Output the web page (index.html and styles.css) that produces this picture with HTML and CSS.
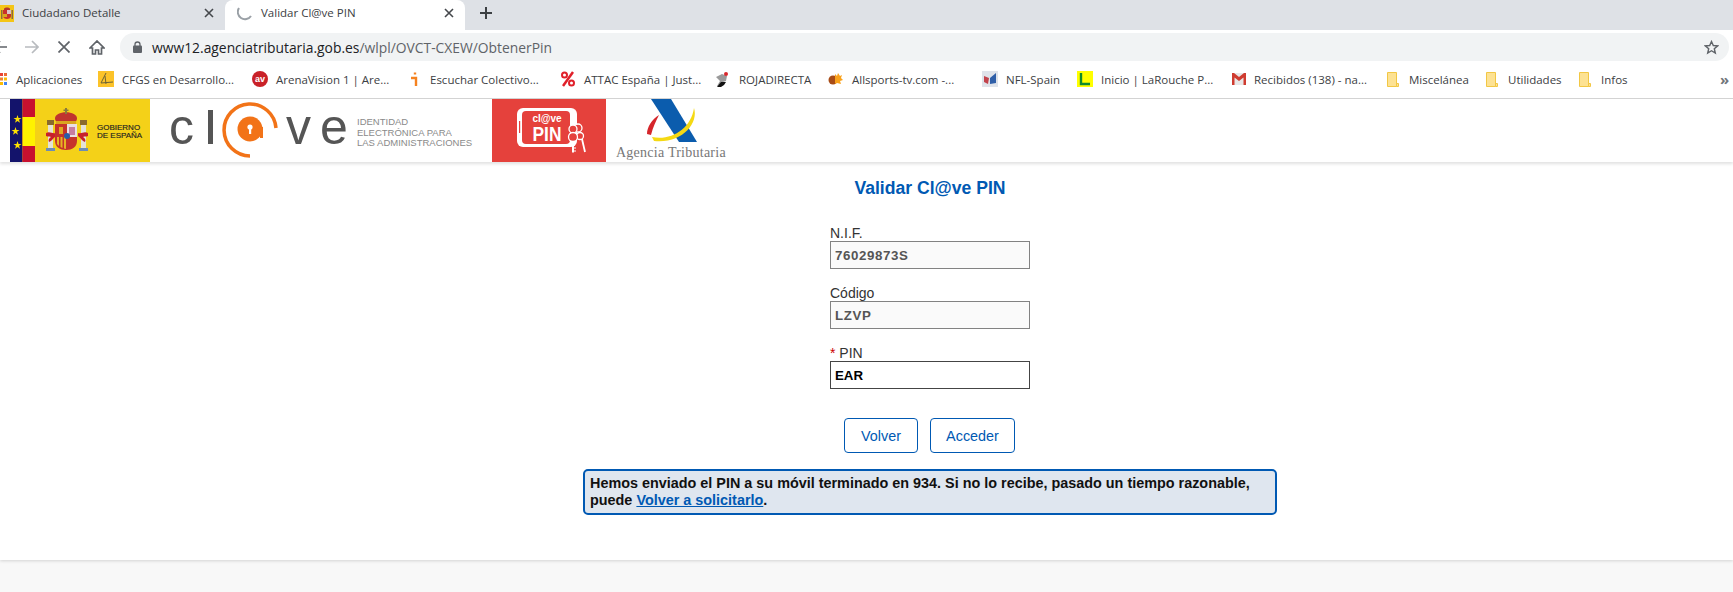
FILE: index.html
```html
<!DOCTYPE html>
<html lang="es">
<head>
    <meta charset="UTF-8">
    <meta name="viewport" content="width=device-width, initial-scale=1.0">
    <title>Validar Cl@ve PIN</title>
    <link rel="stylesheet" href="styles.css">
</head>
<body>

    <!-- Browser chrome -->
    <div class="tab-strip">
        <div class="tab">
            <svg class="tab-favicon" width="14" height="17" viewBox="0 0 14 17">
                <rect width="14" height="17" fill="#f4c516"/>
                <path d="M4 4c0-2 6-2 6 0v1H4z" fill="#b5372c"/>
                <path d="M3 5h8v6c0 2-2 3-4 3s-4-1-4-3z" fill="#c9302c"/>
                <rect x="7" y="5" width="4" height="4" fill="#d9c2c8"/>
                <rect x="3" y="9" width="4" height="3" fill="#d9a520"/>
                <rect x="1" y="5" width="1.500" height="9" fill="#8c6b3c"/>
                <rect x="11.500" y="5" width="1.500" height="9" fill="#8c6b3c"/>
            </svg>
            <span class="tab-title">Ciudadano Detalle</span>
            <svg class="tab-close" width="10" height="10" viewBox="0 0 10 10"><path d="M1 1l8 8M9 1l-8 8"/></svg>
        </div>
        <div class="tab tab-active">
            <svg class="tab-spinner" width="16" height="16" viewBox="0 0 16 16"><path d="M2 3a7 7 0 0 0 12 8"/></svg>
            <span class="tab-title">Validar Cl@ve PIN</span>
            <svg class="tab-close" width="10" height="10" viewBox="0 0 10 10"><path d="M1 1l8 8M9 1l-8 8"/></svg>
        </div>
        <svg class="new-tab" width="12" height="12" viewBox="0 0 12 12"><path d="M6 0v12M0 6h12"/></svg>
    </div>

    <div class="toolbar">
        <svg class="nav-icon back" width="14" height="14" viewBox="0 0 14 14"><path d="M14 7H1M7 1L1 7l6 6"/></svg>
        <svg class="nav-icon forward" width="14" height="14" viewBox="0 0 14 14"><path d="M0 7h13M7 1l6 6-6 6"/></svg>
        <svg class="nav-icon stop" width="12" height="12" viewBox="0 0 12 12"><path d="M.5.5l11 11M11.500.5l-11 11"/></svg>
        <svg class="nav-icon home" width="16" height="15" viewBox="0 0 16 15"><path d="M1 8l7-7 7 7h-2.500v6h-3v-4h-3v4h-3V8z"/></svg>
        <div class="omnibox">
            <svg class="lock" width="9" height="12" viewBox="0 0 9 12"><path d="M2 5V3.500a2.500 2.500 0 0 1 5 0V5" fill="none" stroke="#5f6368" stroke-width="1.300"/><rect y="4.500" width="9" height="7.500" rx="1" fill="#5f6368"/></svg>
            <span class="url">www12.agenciatributaria.gob.es<span class="url-path">/wlpl/OVCT-CXEW/ObtenerPin</span></span>
            <svg class="star" width="15" height="15" viewBox="0 0 15 15"><path d="M7.500 1.500l1.800 4 4.300.4-3.300 2.800 1 4.300-3.800-2.300-3.800 2.300 1-4.300L1.400 5.900l4.300-.4z"/></svg>
        </div>
    </div>

    <div class="bookmarks">
        <div class="bookmark apps">
            <svg width="7" height="12" viewBox="0 0 7 12">
                <rect y="0" width="3" height="3" fill="#ea4335"/><rect x="4" y="0" width="3" height="3" fill="#ea6a35"/>
                <rect y="4.500" width="3" height="3" fill="#ea8335"/><rect x="4" y="4.500" width="3" height="3" fill="#fbbc05"/>
                <rect y="9" width="3" height="3" fill="#fbbc05"/><rect x="4" y="9" width="3" height="3" fill="#4285f4"/>
            </svg>
            <span>Aplicaciones</span>
        </div>
        <div class="bookmark">
            <svg width="16" height="16" viewBox="0 0 16 16"><rect width="16" height="16" fill="#fcc329"/><path d="M8 2L3 12l12-1M7 5l1 8" fill="none" stroke="#6b6236" stroke-width="1"/></svg>
            <span>CFGS en Desarrollo...</span>
        </div>
        <div class="bookmark">
            <svg width="16" height="16" viewBox="0 0 16 16"><circle cx="8" cy="8" r="8" fill="#c92128"/><text x="8" y="11" class="fav-av">av</text></svg>
            <span>ArenaVision 1 | Are...</span>
        </div>
        <div class="bookmark bookmark-narrow">
            <svg width="14" height="16" viewBox="0 0 14 16"><path d="M3 7h5v8M7 1.500v2" fill="none" stroke="#f58220" stroke-width="2.400"/></svg>
            <span>Escuchar Colectivo...</span>
        </div>
        <div class="bookmark">
            <svg width="16" height="16" viewBox="0 0 16 16"><path d="M13 1L3 15" stroke="#e0202a" stroke-width="2.500"/><circle cx="4.500" cy="4" r="2.500" fill="none" stroke="#e0202a" stroke-width="2"/><circle cx="11.500" cy="12" r="2.500" fill="none" stroke="#e0202a" stroke-width="2"/></svg>
            <span>ATTAC España | Just...</span>
        </div>
        <div class="bookmark">
            <svg width="16" height="16" viewBox="0 0 16 16"><path d="M1 6l6-3 5 2-1 5-3 1-2 4H2l3-5z" fill="#9a9a9a"/><path d="M2 16l4-5h5l-2 3-3 2z" fill="#111"/><circle cx="11" cy="3" r="2" fill="#d8272d"/></svg>
            <span>ROJADIRECTA</span>
        </div>
        <div class="bookmark">
            <svg width="16" height="16" viewBox="0 0 16 16"><circle cx="5" cy="9" r="4.500" fill="#a84c17"/><path d="M7 3l2 2 1-3 2 3 2-1-1 3 2 2-3 1 1 3-4-1-2 1z" fill="#f9a11b"/></svg>
            <span>Allsports-tv.com -...</span>
        </div>
        <div class="bookmark">
            <svg width="16" height="16" viewBox="0 0 16 16"><rect width="16" height="16" fill="#dfe3ea"/><path d="M2 5l5 2-1 6-4-2z" fill="#c2434c"/><path d="M8 7l6-5v10l-6 1z" fill="#2f5fa8"/></svg>
            <span>NFL-Spain</span>
        </div>
        <div class="bookmark">
            <svg width="16" height="16" viewBox="0 0 16 16"><rect width="16" height="16" fill="#ffff00"/><path d="M4 2v11h9" fill="none" stroke="#0f8a2c" stroke-width="2.400"/></svg>
            <span>Inicio | LaRouche P...</span>
        </div>
        <div class="bookmark">
            <svg width="14" height="12" viewBox="0 0 14 12"><rect width="14" height="12" fill="#e8e8e8"/><path d="M0 0h2l5 4 5-4h2v12h-2.500V4.500L7 8 2.500 4.500V12H0z" fill="#cf3c30"/></svg>
            <span>Recibidos (138) - na...</span>
        </div>
        <div class="bookmark bookmark-folder">
            <svg class="folder" width="12" height="15" viewBox="0 0 12 15"><path d="M.5.500h9v14h-9z"/><path d="M9.500 11.500h2v3h-2z"/></svg>
            <span>Miscelánea</span>
        </div>
        <div class="bookmark bookmark-folder">
            <svg class="folder" width="12" height="15" viewBox="0 0 12 15"><path d="M.5.500h9v14h-9z"/><path d="M9.500 11.500h2v3h-2z"/></svg>
            <span>Utilidades</span>
        </div>
        <div class="bookmark bookmark-folder">
            <svg class="folder" width="12" height="15" viewBox="0 0 12 15"><path d="M.5.500h9v14h-9z"/><path d="M9.500 11.500h2v3h-2z"/></svg>
            <span>Infos</span>
        </div>
        <div class="bookmark more">»</div>
    </div>

    <!-- Page header logos -->
    <header class="logos">
        <svg class="logo logo-gob" width="140" height="63" viewBox="0 0 140 63">
            <rect width="140" height="63" fill="#f4d118"/>
            <rect width="12.500" height="63" fill="#13136b"/>
            <rect x="12.500" width="12.500" height="63" fill="#c8102e"/>
            <rect x="12.500" y="18" width="12.500" height="29" fill="#fff200"/>
            <g fill="#ffe100">
                <path d="M7.500 16l1 3h3l-2.500 1.800 1 3-2.500-1.800-2.500 1.800 1-3L3.500 19h3z"/>
                <path d="M5.500 28l1 3h3l-2.500 1.800 1 3-2.500-1.800-2.500 1.800 1-3L1.500 31h3z"/>
                <path d="M7.500 42l1 3h3l-2.500 1.800 1 3-2.500-1.800-2.500 1.800 1-3L3.500 45h3z"/>
            </g>
            <!-- escudo -->
            <rect x="38" y="26" width="5" height="23" fill="#e4e2d6"/>
            <rect x="71" y="26" width="5" height="23" fill="#e4e2d6"/>
            <rect x="37" y="21" width="7" height="5" fill="#8a6a2c"/>
            <rect x="70" y="21" width="7" height="5" fill="#8a6a2c"/>
            <rect x="36" y="49" width="9" height="3" fill="#6d8db5"/>
            <rect x="69" y="49" width="9" height="3" fill="#6d8db5"/>
            <path d="M36 34c4-2 6 1 10 0v3c-3 2-4 5-7 6-1-2 0-4 2-5-2-1-3 0-5-1zM78 34c-4-2-6 1-10 0v3c3 2 4 5 7 6 1-2 0-4-2-5 2-1 3 0 5-1z" fill="#c8202a"/>
            <path d="M45 20c-1-9 23-9 22 0l-2 5H47z" fill="#c0332e"/>
            <path d="M46 22h20v3H46z" fill="#d9a520"/>
            <path d="M55 9h2v6h-2zM53.500 10.500h5v1.500h-5z" fill="#8a7a3c"/>
            <path d="M45 25h11v26c-6 0-11-3-11-9z" fill="#c6322b"/>
            <path d="M56 25h11v17c0 6-5 9-11 9z" fill="#c6322b"/>
            <path d="M57 25h10v13H57z" fill="#eadfe4"/>
            <path d="M59 28h6v8h-6z" fill="#c77ca0"/>
            <path d="M47 38h2v9l-2-2zM50.500 38h2v11l-2-1zM54 38h2v12l-2-.5z" fill="#e6b422"/>
            <path d="M49 28h4v7h-4z" fill="#e0a91f"/>
            <circle cx="57" cy="37" r="3" fill="#2a5ca8"/>
            <text class="gob-text" x="87" y="30.500">GOBIERNO</text>
            <text class="gob-text" x="87" y="38.500">DE ESPAÑA</text>
        </svg>

        <svg class="logo logo-clave" width="342" height="63" viewBox="0 0 342 63">
            <text class="clave-letters" x="19" y="45">c</text>
            <rect x="58" y="11" width="5" height="34" fill="#555"/>
            <path d="M126 29A26 26 0 1 0 100 57" fill="none" stroke="#f27318" stroke-width="3.500"/>
            <circle cx="100" cy="30" r="12.500" fill="#f27318"/>
            <rect x="110" y="28" width="3" height="11" fill="#f27318"/>
            <circle cx="100" cy="28" r="2.600" fill="#fff"/>
            <rect x="99" y="29" width="2.200" height="6" fill="#fff"/>
            <text class="clave-letters clave-v" x="136" y="45">v</text>
            <text class="clave-letters" x="170" y="45">e</text>
            <text class="clave-small" x="207" y="26">IDENTIDAD</text>
            <text class="clave-small" x="207" y="37">ELECTRÓNICA PARA</text>
            <text class="clave-small" x="207" y="47">LAS ADMINISTRACIONES</text>
        </svg>

        <svg class="logo logo-pin" width="114" height="63" viewBox="0 0 114 63">
            <rect width="114" height="63" fill="#e5413c"/>
            <rect x="25" y="9" width="60" height="39" rx="6" fill="#fff"/>
            <rect x="30" y="12" width="48" height="33" rx="4" fill="#e5413c"/>
            <rect x="27" y="22" width="1.200" height="12" fill="#e5413c"/>
            <text class="pin-small" x="55" y="22.500">cl@ve</text>
            <text class="pin-big" x="55" y="41.500" textLength="29" lengthAdjust="spacingAndGlyphs">PIN</text>
            <circle cx="86" cy="29" r="4" fill="#e5413c" stroke="#fff" stroke-width="1.300"/>
            <circle cx="81" cy="30" r="4" fill="#e5413c" stroke="#fff" stroke-width="1.300"/>
            <circle cx="88" cy="37" r="3.500" fill="#e5413c" stroke="#fff" stroke-width="1.300"/>
            <path d="M90 40l3 13" stroke="#fff" stroke-width="1.800"/>
            <circle cx="81" cy="38" r="4.500" fill="#e5413c" stroke="#fff" stroke-width="1.300"/>
            <path d="M81 42.500v11" stroke="#fff" stroke-width="2"/>
            <path d="M82 49h2M82 52h2" stroke="#fff" stroke-width="1"/>
        </svg>

        <svg class="logo logo-aeat" width="112" height="63" viewBox="0 0 112 63">
            <path d="M35 0h20l26 43H63z" fill="#0b5cad"/>
            <path d="M36 38C55 42 75 30 78 9c5 16-13 36-40 33z" fill="#f5d913"/>
            <path d="M31 35c0-7 5-15 12-19-3 6-6 12-8 20z" fill="#d5262b"/>
            <text class="aeat-text" x="0" y="58">Agencia Tributaria</text>
        </svg>
    </header>

    <main class="content">
        <h1 class="page-title">Validar Cl@ve PIN</h1>

        <form class="pin-form">
            <div class="field">
                <label for="nif">N.I.F.</label>
                <input id="nif" class="readonly" type="text" value="76029873S" readonly>
            </div>
            <div class="field">
                <label for="codigo">Código</label>
                <input id="codigo" class="readonly" type="text" value="LZVP" readonly>
            </div>
            <div class="field">
                <label for="pin"><span class="required">*</span> PIN</label>
                <input id="pin" type="text" value="EAR">
            </div>
        </form>

        <div class="actions">
            <button type="button" class="btn btn-volver">Volver</button>
            <button type="button" class="btn btn-acceder">Acceder</button>
        </div>

        <div class="notice">
            <p>Hemos enviado el PIN a su móvil terminado en 934. Si no lo recibe, pasado un tiempo razonable,</p>
            <p>puede <a href="#">Volver a solicitarlo</a>.</p>
        </div>
    </main>

    <footer class="page-footer"></footer>

</body>
</html>
```

FILE: styles.css
```css
body {
    margin: 0;
    width: 1733px;
    height: 592px;
    overflow: hidden;
    background: #f8f8f8;
    font-family: "Liberation Sans", Arial, sans-serif;
}

/* --- Tab strip --- */
.tab-strip {
    height: 30px;
    background: #dee1e6;
    display: flex;
    align-items: center;
}
.tab {
    box-sizing: border-box;
    width: 225px;
    height: 30px;
    padding-bottom: 4px;
    display: flex;
    align-items: center;
    flex-shrink: 0;
}
.tab-favicon { margin-right: 8px; }
.tab-title {
    flex-grow: 1;
    margin-bottom: 2px;
    font-family: "Open Sans", sans-serif;
    font-size: 11.5px;
    color: #3c4043;
    white-space: nowrap;
}
.tab-close { margin-right: 11px; stroke: #45484c; stroke-width: 1.6; fill: none; }
.tab-active {
    width: 240px;
    background: #fff;
    border-radius: 8px 8px 0 0;
    padding-left: 13px;
}
.tab-spinner { margin-right: 8px; fill: none; stroke: #9aa0a6; stroke-width: 2; margin-left: -1px; }
.new-tab { margin: 0 0 4px 15px; stroke: #3c4043; stroke-width: 2; fill: none; }

/* --- Toolbar --- */
.toolbar {
    height: 34px;
    background: #fff;
    display: flex;
    align-items: center;
}
.nav-icon { flex-shrink: 0; stroke: #5f6368; stroke-width: 1.7; fill: none; }
.back { margin-left: -7px; }
.forward { margin-left: 18px; stroke: #b8bbbf; }
.stop { margin-left: 19px; }
.home { margin-left: 19px; }
.omnibox {
    margin-left: 15px;
    flex-grow: 1;
    margin-right: 4px;
    height: 28px;
    background: #f1f3f4;
    border-radius: 14px;
    display: flex;
    align-items: center;
    padding-left: 13px;
    padding-right: 10px;
}
.lock { margin-right: 10px; }
.url {
    flex-grow: 1;
    font-family: "Open Sans", sans-serif;
    font-size: 13.85px;
    color: #202124;
}
.url-path { color: #5f6368; }
.star { fill: none; stroke: #5f6368; stroke-width: 1.4; }

/* --- Bookmarks bar --- */
.bookmarks {
    box-sizing: border-box;
    height: 35px;
    padding-bottom: 4px;
    background: #fff;
    border-bottom: 1px solid #d4d4d4;
    display: grid;
    grid-template-columns: 98px 154px 156px 152px 155px 113px 154px 95px 155px 155px 99px 93px 141px 1fr;
    align-items: center;
}
.bookmark {
    display: flex;
    align-items: center;
    gap: 8px;
    font-family: "Open Sans", sans-serif;
    font-size: 11.5px;
    color: #3c4043;
    white-space: nowrap;
}
.bookmark svg { flex-shrink: 0; }
.apps { gap: 9px; }
.bookmark-folder { gap: 10px; }
.folder { fill: #fde293; stroke: #f2c744; stroke-width: 1; }
.more { color: #70757a; font-size: 15px; font-weight: bold; }
.fav-av { font: bold 9px "Liberation Sans", sans-serif; fill: #fff; text-anchor: middle; }

/* --- Logos --- */
.logos {
    height: 63px;
    background: #fff;
    display: flex;
    padding-left: 10px;
    position: relative;
    box-shadow: 0 2px 3px rgba(0, 0, 0, 0.12);
}
.logo { display: block; flex-shrink: 0; }
.logo-pin { margin-right: 10px; }
.gob-text { font: 8px "Liberation Sans", sans-serif; fill: #222; stroke: #222; stroke-width: .15; }
.clave-letters { font: 50px "Liberation Sans", sans-serif; fill: #555; }
.clave-small { font: 9.5px "Liberation Sans", sans-serif; fill: #8a8a8a; }
.pin-small { font: bold 10px "Liberation Sans", sans-serif; fill: #fff; text-anchor: middle; }
.pin-big { font: bold 20px "Liberation Sans", sans-serif; fill: #fff; text-anchor: middle; }
.aeat-text { font: 14px "Liberation Serif", serif; fill: #777; letter-spacing: .25px; }

/* --- Page content --- */
.content {
    box-sizing: border-box;
    height: 398px;
    background: #fff;
    padding: 16px 0 0 127px;
    display: flex;
    flex-direction: column;
    align-items: center;
    box-shadow: 0 1px 3px rgba(0, 0, 0, 0.15);
}
.page-title {
    margin: 0 0 27px;
    font-size: 17.6px;
    line-height: 20px;
    font-weight: bold;
    color: #0059b3;
}
.pin-form { width: 200px; }
.field { margin-bottom: 16px; }
.field label {
    display: block;
    font-size: 14px;
    line-height: 16px;
    color: #333;
}
.field input {
    box-sizing: border-box;
    display: block;
    width: 200px;
    height: 28px;
    margin: 0;
    padding: 0 4px;
    border: 1px solid #444;
    border-radius: 0;
    outline: none;
    font-family: "Liberation Sans", sans-serif;
    font-size: 13.3px;
    font-weight: bold;
    color: #000;
    background: #fff;
}
.field input.readonly {
    border-color: #828282;
    background: #fafafa;
    color: #555;
    letter-spacing: .6px;
}
.required { color: #c00; }

.actions {
    display: flex;
    gap: 12px;
    margin: 13px 1px 0 0;
}
.btn {
    box-sizing: border-box;
    height: 35px;
    background: #fff;
    border: 1px solid #0059b3;
    border-radius: 4px;
    color: #0059b3;
    font-family: "Liberation Sans", sans-serif;
    font-size: 14.4px;
    padding: 0;
}
.btn-volver { width: 74px; }
.btn-acceder { width: 85px; }

.notice {
    box-sizing: border-box;
    width: 694px;
    height: 46px;
    margin-top: 16px;
    padding: 4px 5px;
    border: 2px solid #0059b3;
    border-radius: 5px;
    background: #dfe6ef;
    font-size: 14.4px;
    line-height: 17px;
    font-weight: bold;
    color: #111;
}
.notice p { margin: 0; }
.notice a { color: #0059b3; }

.page-footer { height: 32px; }
```
